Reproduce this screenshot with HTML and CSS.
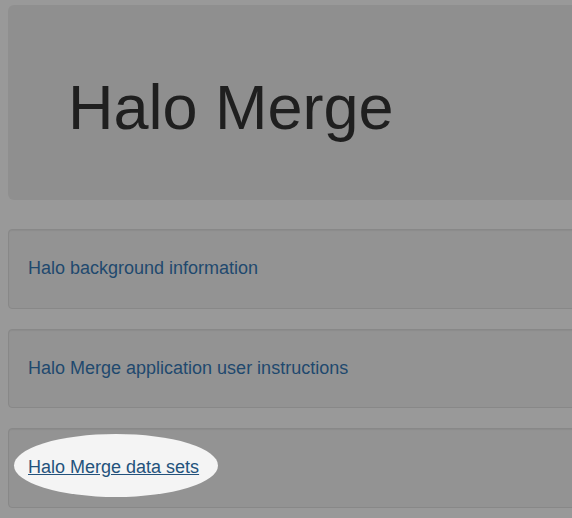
FILE: index.html
```html
<!DOCTYPE html>
<html lang="en">
<head>
<meta charset="utf-8">
<title>Halo Merge</title>
<link rel="stylesheet" href="styles.css">
</head>
<body>
<div class="container">
  <div class="jumbotron">
    <h1>Halo Merge</h1>
  </div>
  <div class="well">
    <h4><a class="link" href="#">Halo background information</a></h4>
  </div>
  <div class="well">
    <h4><a class="link" href="#">Halo Merge application user instructions</a></h4>
  </div>
  <div class="well">
    <h4><a class="link highlighted" href="#">Halo Merge data sets</a></h4>
  </div>
</div>
</body>
</html>
```

FILE: styles.css
```css
html, body {
  overflow: hidden;
}
body {
  margin: 0;
  padding: 5px 0 0 8px;
  background: #999999;
  font-family: "Liberation Sans", Arial, Helvetica, sans-serif;
  font-size: 14px;
  line-height: 1.42857;
  color: #1f1f1f;
}
.container {
  width: 1140px;
}
.jumbotron {
  background: #8f8f8f;
  border-radius: 6px;
  padding: 48px 60px;
  margin-bottom: 29px;
}
.jumbotron h1 {
  margin: 20px 0 10px;
  font-size: 63px;
  font-weight: 500;
  line-height: 1.1;
  color: #1f1f1f;
}
.well {
  background: #939393;
  border: 1px solid #888888;
  border-radius: 4px;
  box-shadow: inset 0 1px 1px rgba(0, 0, 0, 0.05);
  padding: 19px;
  margin-bottom: 20px;
}
.well h4 {
  margin: 10px 0;
  font-size: 18px;
  font-weight: 500;
  line-height: 19.5px;
}
.link {
  color: #1f496e;
  text-decoration: none;
  position: relative;
}
.highlighted {
  color: #23527c;
  text-decoration: underline;
  z-index: 1;
}
.highlighted::before {
  content: "";
  position: absolute;
  z-index: -1;
  left: -14px;
  top: -23px;
  width: 204px;
  height: 63px;
  border-radius: 50%;
  background: #f4f4f4;
}
```
